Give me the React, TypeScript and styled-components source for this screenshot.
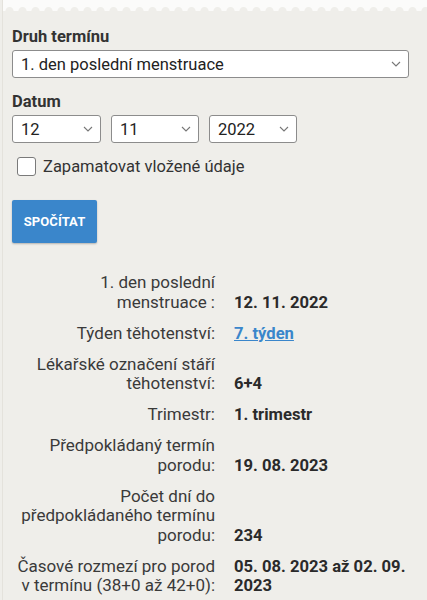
import * as React from 'react'
import styled, { createGlobalStyle } from 'styled-components'

const GlobalStyle = createGlobalStyle`
  html, body {
    margin: 0;
    padding: 0;
    background: #efeeea;
  }
  body {
    font-family: Roboto, "Noto Sans", "Liberation Sans", sans-serif;
    color: #333;
  }
`

const results = [
  { label: '1. den poslední menstruace :', value: '12. 11. 2022' },
  { label: 'Týden těhotenství:', value: '7. týden', link: true },
  { label: 'Lékařské označení stáří těhotenství:', value: '6+4' },
  { label: 'Trimestr:', value: '1. trimestr' },
  { label: 'Předpokládaný termín porodu:', value: '19. 08. 2023' },
  { label: 'Počet dní do předpokládaného termínu porodu:', value: '234' },
  { label: 'Časové rozmezí pro porod v termínu (38+0 až 42+0):', value: '05. 08. 2023 až 02. 09. 2023' },
]

const Page = styled.div`
  min-height: 600px;
  background: #efeeea;
  border-left: 1px solid #e4e2dc;
  margin-left: 2px;
`

const TornEdge = styled.div`
  height: 11px;
  background:
    radial-gradient(circle at 50% 100%, #efeeea 3.5px, transparent 4.5px) 0 0 / 13px 11px repeat-x,
    #fbfbfa;
`

const Form = styled.div`
  padding: 16px 14px 0 9px;
`

const Label = styled.div`
  font-size: 16.5px;
  font-weight: 700;
  color: #333;
  line-height: 20px;
  margin-bottom: 3px;
`

const Field = styled.div`
  margin-bottom: 14px;
`

const SelectRow = styled.div`
  display: flex;
  gap: 10px;
`

const SelectWrap = styled.div<{ $width: string }>`
  position: relative;
  width: ${p => p.$width};
`

const Select = styled.select`
  appearance: none;
  -webkit-appearance: none;
  width: 100%;
  height: 28px;
  box-sizing: border-box;
  border: 1px solid #8c8c8c;
  border-radius: 3px;
  background: #fff;
  font-family: inherit;
  font-size: 16.5px;
  color: #222;
  padding: 0 24px 0 8px;
  outline: none;
`

const Chevron = styled.svg`
  position: absolute;
  right: 8px;
  top: 11px;
  width: 10px;
  height: 6px;
  pointer-events: none;
`

const CheckRow = styled.label`
  display: flex;
  align-items: center;
  gap: 7px;
  margin: 2px 0 0 5px;
  font-size: 16.5px;
  color: #333;
`

const Box = styled.span`
  width: 17px;
  height: 17px;
  border: 1px solid #7a7a7a;
  border-radius: 3px;
  background: #fff;
  display: inline-block;
`

const Button = styled.button`
  margin-top: 24px;
  width: 85px;
  height: 43px;
  border: none;
  border-radius: 2px;
  background: #3a86cb;
  box-shadow: 0 1px 2px rgba(0, 0, 0, 0.25);
  color: #fff;
  font-family: inherit;
  font-size: 13px;
  font-weight: 700;
  letter-spacing: 0.1px;
`

const Results = styled.div`
  display: grid;
  grid-template-columns: 203px 1fr;
  column-gap: 19px;
  row-gap: 11.5px;
  margin-top: 30px;
  margin-right: -6px;
  font-size: 17px;
  line-height: 19.5px;
`

const Key = styled.div`
  text-align: right;
  color: #3a3a3a;
  align-self: end;
`

const Value = styled.div`
  font-size: 16.6px;
  font-weight: 700;
  color: #2a2a2a;
  align-self: end;
`

const Link = styled.a`
  color: #3a86cb;
  text-decoration: underline;
`

const Dropdown = ({ value, width }: { value: string; width: string }) => (
  <SelectWrap $width={width}>
    <Select defaultValue={value}>
      <option>{value}</option>
    </Select>
    <Chevron viewBox="0 0 10 6">
      <path d="M1 1l4 4 4-4" fill="none" stroke="#777" strokeWidth="1.1" />
    </Chevron>
  </SelectWrap>
)

const App = () => (
  <Page>
    <GlobalStyle />
    <TornEdge />
    <Form>
      <Field>
        <Label>Druh termínu</Label>
        <Dropdown value="1. den poslední menstruace" width="397px" />
      </Field>
      <Field>
        <Label>Datum</Label>
        <SelectRow>
          <Dropdown value="12" width="89px" />
          <Dropdown value="11" width="88px" />
          <Dropdown value="2022" width="88px" />
        </SelectRow>
      </Field>
      <CheckRow>
        <Box />
        Zapamatovat vložené údaje
      </CheckRow>
      <Button>SPOČÍTAT</Button>
      <Results>
        {results.map(r => (
          <React.Fragment key={r.label}>
            <Key>{r.label}</Key>
            <Value>{r.link ? <Link href="#">{r.value}</Link> : r.value}</Value>
          </React.Fragment>
        ))}
      </Results>
    </Form>
  </Page>
)

export default App
